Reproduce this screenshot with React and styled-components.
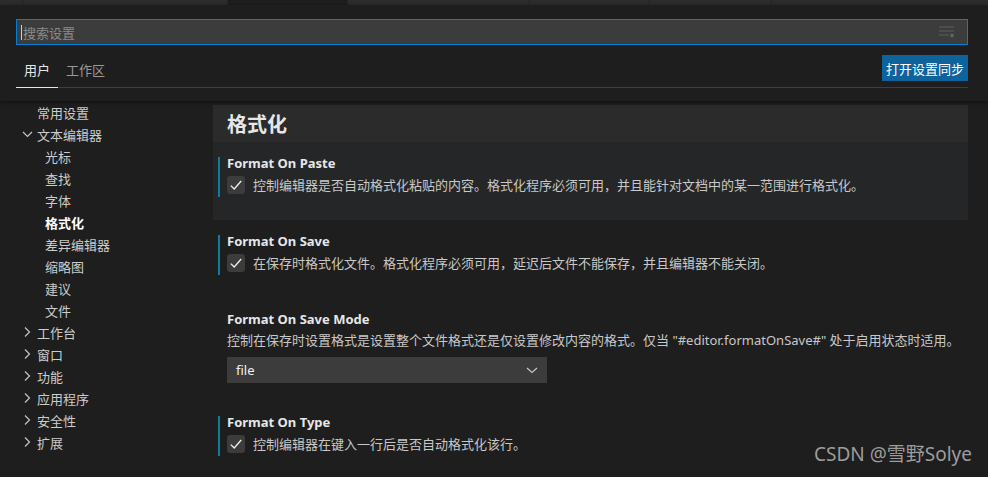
import styled, { createGlobalStyle } from 'styled-components';

const GlobalStyle = createGlobalStyle`
    html, body {
        margin: 0;
        padding: 0;
        background: #1e1e1e;
        overflow: hidden;
    }
    * {
        box-sizing: border-box;
    }
`;

const FONT = `"Noto Sans", "Noto Sans CJK SC", sans-serif`;

const Root = styled.div`
    position: relative;
    width: 988px;
    height: 477px;
    background: #1e1e1e;
    font-family: ${FONT};
    font-size: 13px;
    color: #cccccc;
    display: flex;
    flex-direction: column;
    overflow: hidden;
`;

// top editor tabs (cut off)
const TabStrip = styled.div`
    display: flex;
    height: 5px;
    flex-shrink: 0;
`;

const EditorTab = styled.div`
    width: ${(p) => p.$w}px;
    flex-shrink: 0;
    height: 100%;
    background: ${(p) => (p.$active ? '#1e1e1e' : '#2d2d2d')};
    border-right: 1px solid #252526;
    &:last-child {
        flex: 1;
        border-right: none;
    }
`;

const Header = styled.div`
    position: relative;
    z-index: 1;
    padding: 14px 20px 13px 16px;
    background: #1e1e1e;
    box-shadow: 0 1px 4px rgba(0, 0, 0, 0.55);
`;

const SearchBox = styled.div`
    height: 26px;
    display: flex;
    align-items: center;
    background: #3c3c3c;
    border: 1px solid #007fd4;
    padding: 0 12px 0 4px;
`;

const Caret = styled.span`
    width: 1px;
    height: 15px;
    background: #cfcfcf;
    margin-right: 1px;
`;

const Placeholder = styled.span`
    flex: 1;
    color: #8b8b8b;
    font-size: 13px;
`;

const ClearIcon = styled.svg`
    width: 16px;
    height: 12px;
`;

const TabRow = styled.div`
    margin-top: 10px;
    display: flex;
    align-items: flex-start;
    justify-content: space-between;
    border-bottom: 1px solid #3f3f3f;
    height: 33px;
`;

const Tabs = styled.div`
    display: flex;
    height: 100%;
`;

const Tab = styled.div`
    padding: 0 8px;
    height: 33px;
    line-height: 31px;
    font-size: 13px;
    color: ${(p) => (p.$active ? '#e7e7e7' : '#9a9a9a')};
    border-bottom: 1px solid ${(p) => (p.$active ? '#e7e7e7' : 'transparent')};
    margin-bottom: -1px;
`;

const SyncButton = styled.button`
    height: 26px;
    padding: 0 4px;
    border: none;
    background: #0e639c;
    color: #ffffff;
    font-family: ${FONT};
    font-size: 13px;
`;

const Body = styled.div`
    flex: 1;
    display: flex;
    min-height: 0;
`;

const Toc = styled.nav`
    width: 213px;
    flex-shrink: 0;
    padding-top: 0;
`;

const TocRow = styled.div`
    height: 22px;
    display: flex;
    align-items: center;
    padding-left: ${(p) => (p.$level === 2 ? 45 : 20)}px;
    color: ${(p) => (p.$active ? '#ffffff' : '#cccccc')};
    font-weight: ${(p) => (p.$active ? 700 : 400)};
    font-size: 13px;
`;

const Twistie = styled.svg`
    width: 17px;
    height: 16px;
    flex-shrink: 0;
`;

const Content = styled.main`
    flex: 1;
    padding: 4px 20px 0 0;
`;

const SectionTitle = styled.h2`
    margin: 0;
    height: 37px;
    display: flex;
    align-items: center;
    padding-left: 14px;
    background: #2b2b2b;
    color: #e7e7e7;
    font-size: 20px;
    font-weight: 700;
`;

const Setting = styled.div`
    padding: 15px 0 ${(p) => p.$bottom || 23}px 5px;
    background: ${(p) => (p.$focused ? '#252627' : 'transparent')};
`;

const SettingInner = styled.div`
    border-left: 2px solid ${(p) => (p.$modified ? '#0c7d9d' : 'transparent')};
    padding: 0 0 3px 7px;
`;

const SettingTitle = styled.div`
    font-size: 13px;
    line-height: 13px;
    font-weight: 700;
    color: #e7e7e7;
`;

const CheckRow = styled.div`
    margin-top: 6px;
    display: flex;
    align-items: center;
    gap: 8px;
`;

const CheckBox = styled.div`
    width: 18px;
    height: 18px;
    border-radius: 3px;
    background: #3c3c3c;
    display: flex;
    align-items: center;
    justify-content: center;
    flex-shrink: 0;
`;

const Description = styled.div`
    font-size: 13px;
    line-height: 18px;
    color: #c8c8c8;
    margin-top: ${(p) => p.$mt || 0}px;
    white-space: nowrap;
`;

const Select = styled.div`
    margin-top: 8px;
    width: 320px;
    height: 26px;
    background: #3c3c3c;
    display: flex;
    align-items: center;
    justify-content: space-between;
    padding: 0 7px 0 9px;
    color: #f0f0f0;
    font-size: 13px;
`;

const Watermark = styled.div`
    position: absolute;
    right: 16px;
    bottom: 10px;
    font-family: ${FONT};
    font-size: 19px;
    color: rgba(200, 200, 200, 0.75);
`;

const tabs = [23, 205, 120, 182, 120, 122, 216];

const tocItems = [
    { label: '常用设置', level: 1 },
    { label: '文本编辑器', level: 1, open: true },
    { label: '光标', level: 2 },
    { label: '查找', level: 2 },
    { label: '字体', level: 2 },
    { label: '格式化', level: 2, active: true },
    { label: '差异编辑器', level: 2 },
    { label: '缩略图', level: 2 },
    { label: '建议', level: 2 },
    { label: '文件', level: 2 },
    { label: '工作台', level: 1, closed: true },
    { label: '窗口', level: 1, closed: true },
    { label: '功能', level: 1, closed: true },
    { label: '应用程序', level: 1, closed: true },
    { label: '安全性', level: 1, closed: true },
    { label: '扩展', level: 1, closed: true },
];

function Chevron({ open, closed }) {
    if (!open && !closed) return <Twistie as="span" />;
    return (
        <Twistie viewBox="0 0 17 16">
            <path
                d={open ? 'M3 6l4.5 4.5L12 6' : 'M5 3.5l4.5 4.5L5 12.5'}
                fill="none"
                stroke="#c5c5c5"
                strokeWidth="1.2"
            />
        </Twistie>
    );
}

function Check() {
    return (
        <svg width="16" height="16" viewBox="0 0 16 16">
            <path d="M2.8 8.6l3.4 3.4 7-8" fill="none" stroke="#f0f0f0" strokeWidth="1.3" />
        </svg>
    );
}

function CheckSetting({ title, desc, focused }) {
    return (
        <Setting $focused={focused}>
            <SettingInner $modified>
                <SettingTitle>{title}</SettingTitle>
                <CheckRow>
                    <CheckBox>
                        <Check />
                    </CheckBox>
                    <Description>{desc}</Description>
                </CheckRow>
            </SettingInner>
        </Setting>
    );
}

export default function App() {
    return (
        <Root>
            <GlobalStyle />
            <TabStrip>
                {tabs.map((w, i) => (
                    <EditorTab key={i} $w={w} $active={i === 2} />
                ))}
            </TabStrip>
            <Header>
                <SearchBox>
                    <Caret />
                    <Placeholder>搜索设置</Placeholder>
                    <ClearIcon viewBox="0 0 16 12">
                        <path d="M0 1h15M0 5h15M0 9h10" stroke="#5e5e5e" strokeWidth="1" />
                        <path d="M11.5 8l3 3M14.5 8l-3 3" stroke="#6a6a6a" strokeWidth="1.2" />
                    </ClearIcon>
                </SearchBox>
                <TabRow>
                    <Tabs>
                        <Tab $active>用户</Tab>
                        <Tab>工作区</Tab>
                    </Tabs>
                    <SyncButton>打开设置同步</SyncButton>
                </TabRow>
            </Header>
            <Body>
                <Toc>
                    {tocItems.map((item) => (
                        <TocRow key={item.label} $level={item.level} $active={item.active}>
                            {item.level === 1 && <Chevron open={item.open} closed={item.closed} />}
                            {item.label}
                        </TocRow>
                    ))}
                </Toc>
                <Content>
                    <SectionTitle>格式化</SectionTitle>
                    <CheckSetting
                        focused
                        title="Format On Paste"
                        desc="控制编辑器是否自动格式化粘贴的内容。格式化程序必须可用，并且能针对文档中的某一范围进行格式化。"
                    />
                    <CheckSetting
                        title="Format On Save"
                        desc="在保存时格式化文件。格式化程序必须可用，延迟后文件不能保存，并且编辑器不能关闭。"
                    />
                    <Setting $bottom={15}>
                        <SettingInner>
                            <SettingTitle>Format On Save Mode</SettingTitle>
                            <Description $mt={5}>
                                控制在保存时设置格式是设置整个文件格式还是仅设置修改内容的格式。仅当 "#editor.formatOnSave#" 处于启用状态时适用。
                            </Description>
                            <Select>
                                <span>file</span>
                                <svg width="16" height="16" viewBox="0 0 16 16">
                                    <path d="M3 6l5 4.5L13 6" fill="none" stroke="#c5c5c5" strokeWidth="1.2" />
                                </svg>
                            </Select>
                        </SettingInner>
                    </Setting>
                    <CheckSetting title="Format On Type" desc="控制编辑器在键入一行后是否自动格式化该行。" />
                </Content>
            </Body>
            <Watermark>CSDN @雪野Solye</Watermark>
        </Root>
    );
}
